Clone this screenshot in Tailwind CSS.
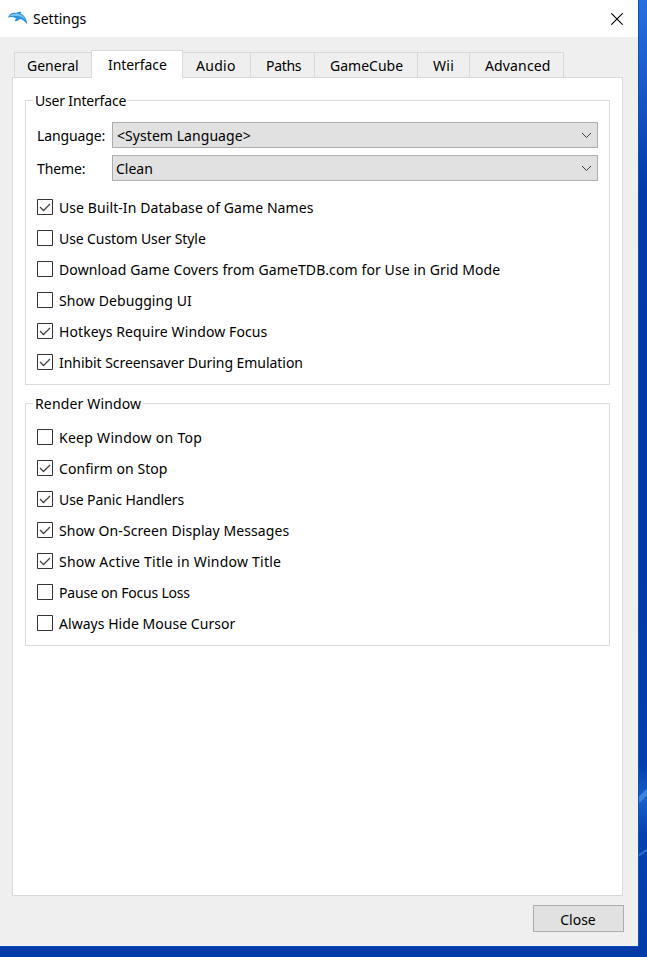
<!DOCTYPE html>
<html lang="en">
<head>
<meta charset="utf-8">
<title>Settings</title>
<script src="https://cdn.jsdelivr.net/npm/@tailwindcss/browser@4"></script>
</head>
<body class="relative h-[957px] w-[647px] overflow-hidden bg-[#0039a6] font-['Noto_Sans',sans-serif] text-[14px] leading-4 text-black">
<svg class="absolute inset-0" width="647" height="957" viewBox="0 0 647 957">
  <defs>
    <linearGradient id="sky" x1="0" y1="0" x2="0" y2="1">
      <stop offset="0" stop-color="#2a6fe0"/><stop offset=".08" stop-color="#1c5bcb"/><stop offset=".2" stop-color="#0039a8"/><stop offset=".6" stop-color="#0038a5"/><stop offset=".8" stop-color="#0240ad"/><stop offset=".835" stop-color="#1b5fc9"/><stop offset=".87" stop-color="#0541b0"/><stop offset="1" stop-color="#003aa6"/>
    </linearGradient>
  </defs>
  <rect x="638" width="9" height="957" fill="url(#sky)"/>
  <rect y="946" width="647" height="11" fill="#003ba8"/>
  <path d="M638 801L648 791" stroke="#4f95e0" stroke-width="5" opacity=".7"/>
  <path d="M638 856L648 849" stroke="#2f73d4" stroke-width="2"/>
  <path d="M0 946.5H638.5V0" fill="none" stroke="#0b50bd"/>
</svg>
<main class="relative flex h-[946px] w-[638px] flex-col bg-[#efefef]">
  <header class="flex h-[37px] items-center bg-white pl-[7px] pr-[15px]">
    <svg class="mr-[5px]" width="21" height="16" viewBox="0 0 21 16">
      <path d="M1 6.500C2 3 5.500 1.300 9 2C11 .5 13 .5 14.500 1L13.500 2.500C17 4 20 8 20.300 13.500C18 10 15.500 8.500 13 8C12 9.500 9.500 10.500 7.500 10L9 7.500C6 5.500 4 6 1 6.500Z" fill="#2b93dc"/>
      <path d="M2.500 5.300C5 2.800 9 2.500 12.500 3.200C15.500 4 17.500 6.500 18.500 8.500C15 5.500 10 3.800 2.500 5.300Z" fill="#7cc8f5"/>
    </svg>
    <h1 class="grow">Settings</h1>
    <svg width="12" height="12" viewBox="0 0 12 12"><path d="M.3 .3L11.700 11.700M11.700 .3L.3 11.700" stroke="#000" stroke-width="1.100" fill="none"/></svg>
  </header>
  <div class="flex grow flex-col px-3 pt-[13px]">
    <nav class="relative z-10 -mb-px flex h-7 items-end pl-0.5">
      <div class="flex h-[26px] w-[77px] items-center border border-r-0 border-[#d9d9d9] pl-3 pt-0.5">General</div>
      <div class="flex h-7 w-[92px] items-center border border-b-0 border-[#d9d9d9] bg-white pl-4 tracking-[-0.08px]">Interface</div>
      <div class="flex h-[26px] w-[68px] items-center border border-l-0 border-[#d9d9d9] pl-[13px] pt-0.5 tracking-[0.3px]">Audio</div>
      <div class="flex h-[26px] w-16 items-center border border-l-0 border-[#d9d9d9] pl-[15px] pt-0.5 tracking-[-0.3px]">Paths</div>
      <div class="flex h-[26px] w-[103px] items-center border border-l-0 border-[#d9d9d9] pl-[15px] pt-0.5">GameCube</div>
      <div class="flex h-[26px] w-[52px] items-center border border-l-0 border-[#d9d9d9] pl-[15px] pt-0.5 tracking-[0.3px]">Wii</div>
      <div class="flex h-[26px] w-[94px] items-center border border-l-0 border-[#d9d9d9] pl-[15px] pt-0.5 tracking-[0.15px]">Advanced</div>
    </nav>
    <section class="flex h-[819px] w-[611px] flex-col gap-[18px] border border-[#d9d9d9] bg-white px-3 pt-[22px]">
      <div class="relative h-[285px] border border-[#dcdcdc] pl-[11px] pt-[21px]">
        <h2 class="absolute -top-2 left-[7px] bg-white px-0.5 tracking-[-0.18px]">User Interface</h2>
        <div class="flex flex-col gap-[7px]">
          <div class="flex items-center">
            <span class="w-[75px] pt-0.5 tracking-[-0.12px]">Language:</span>
            <div class="flex h-[26px] w-[486px] items-center justify-between border border-[#adadad] bg-[#e1e1e1] pl-1 pr-[5px]"><span class="pt-0.5 tracking-[0.06px]">&lt;System Language&gt;</span>
              <svg width="11" height="7" viewBox="0 0 11 7"><path d="M1 1L5.500 5.500L10 1" stroke="#3c3c3c" fill="none"/></svg></div>
          </div>
          <div class="flex items-center">
            <span class="w-[75px] pt-0.5 tracking-[-0.12px]">Theme:</span>
            <div class="flex h-[26px] w-[486px] items-center justify-between border border-[#adadad] bg-[#e1e1e1] pl-[3px] pr-[5px]"><span class="pt-0.5">Clean</span>
              <svg width="11" height="7" viewBox="0 0 11 7"><path d="M1 1L5.500 5.500L10 1" stroke="#3c3c3c" fill="none"/></svg></div>
          </div>
        </div>
        <div class="mt-[18px] flex flex-col gap-[15px]">
          <div class="flex h-4 gap-1.5"><svg width="16" height="16" viewBox="0 0 16 16" fill="none"><path d="M.5 .5H15.500V15.500H.5Z" stroke="#333"/><path d="M3 8L6.500 11.500L13 5" stroke="#444" stroke-width="1.300"/></svg><span class="pt-px tracking-[0.085px]">Use Built-In Database of Game Names</span></div>
          <div class="flex h-4 gap-1.5"><svg width="16" height="16" viewBox="0 0 16 16" fill="none"><path d="M.5 .5H15.500V15.500H.5Z" stroke="#333"/></svg><span class="pt-px tracking-[-0.09px]">Use Custom User Style</span></div>
          <div class="flex h-4 gap-1.5"><svg width="16" height="16" viewBox="0 0 16 16" fill="none"><path d="M.5 .5H15.500V15.500H.5Z" stroke="#333"/></svg><span class="pt-px tracking-[0.11px]">Download Game Covers from GameTDB.com for Use in Grid Mode</span></div>
          <div class="flex h-4 gap-1.5"><svg width="16" height="16" viewBox="0 0 16 16" fill="none"><path d="M.5 .5H15.500V15.500H.5Z" stroke="#333"/></svg><span class="pt-px tracking-[0.1px]">Show Debugging UI</span></div>
          <div class="flex h-4 gap-1.5"><svg width="16" height="16" viewBox="0 0 16 16" fill="none"><path d="M.5 .5H15.500V15.500H.5Z" stroke="#333"/><path d="M3 8L6.500 11.500L13 5" stroke="#444" stroke-width="1.300"/></svg><span class="pt-px tracking-[0.1px]">Hotkeys Require Window Focus</span></div>
          <div class="flex h-4 gap-1.5"><svg width="16" height="16" viewBox="0 0 16 16" fill="none"><path d="M.5 .5H15.500V15.500H.5Z" stroke="#333"/><path d="M3 8L6.500 11.500L13 5" stroke="#444" stroke-width="1.300"/></svg><span class="pt-px tracking-[-0.055px]">Inhibit Screensaver During Emulation</span></div>
        </div>
      </div>
      <div class="relative h-[243px] border border-[#dcdcdc] pl-[11px] pt-[25px]">
        <h2 class="absolute -top-2 left-[7px] bg-white px-0.5 tracking-[0.15px]">Render Window</h2>
        <div class="flex flex-col gap-[15px]">
          <div class="flex h-4 gap-1.5"><svg width="16" height="16" viewBox="0 0 16 16" fill="none"><path d="M.5 .5H15.500V15.500H.5Z" stroke="#333"/></svg><span class="pt-px tracking-[0.28px]">Keep Window on Top</span></div>
          <div class="flex h-4 gap-1.5"><svg width="16" height="16" viewBox="0 0 16 16" fill="none"><path d="M.5 .5H15.500V15.500H.5Z" stroke="#333"/><path d="M3 8L6.500 11.500L13 5" stroke="#444" stroke-width="1.300"/></svg><span class="pt-px tracking-[0.07px]">Confirm on Stop</span></div>
          <div class="flex h-4 gap-1.5"><svg width="16" height="16" viewBox="0 0 16 16" fill="none"><path d="M.5 .5H15.500V15.500H.5Z" stroke="#333"/><path d="M3 8L6.500 11.500L13 5" stroke="#444" stroke-width="1.300"/></svg><span class="pt-px tracking-[-0.1px]">Use Panic Handlers</span></div>
          <div class="flex h-4 gap-1.5"><svg width="16" height="16" viewBox="0 0 16 16" fill="none"><path d="M.5 .5H15.500V15.500H.5Z" stroke="#333"/><path d="M3 8L6.500 11.500L13 5" stroke="#444" stroke-width="1.300"/></svg><span class="pt-px tracking-[0.08px]">Show On-Screen Display Messages</span></div>
          <div class="flex h-4 gap-1.5"><svg width="16" height="16" viewBox="0 0 16 16" fill="none"><path d="M.5 .5H15.500V15.500H.5Z" stroke="#333"/><path d="M3 8L6.500 11.500L13 5" stroke="#444" stroke-width="1.300"/></svg><span class="pt-px tracking-[0.24px]">Show Active Title in Window Title</span></div>
          <div class="flex h-4 gap-1.5"><svg width="16" height="16" viewBox="0 0 16 16" fill="none"><path d="M.5 .5H15.500V15.500H.5Z" stroke="#333"/></svg><span class="pt-px tracking-[-0.2px]">Pause on Focus Loss</span></div>
          <div class="flex h-4 gap-1.5"><svg width="16" height="16" viewBox="0 0 16 16" fill="none"><path d="M.5 .5H15.500V15.500H.5Z" stroke="#333"/></svg><span class="pt-px tracking-[0.04px]">Always Hide Mouse Cursor</span></div>
        </div>
      </div>
    </section>
    <button class="mr-0.5 mt-[9px] h-[27px] w-[91px] self-end border border-[#adadad] bg-[#e1e1e1] pr-px pt-[3px]">Close</button>
  </div>
</main>
</body>
</html>
